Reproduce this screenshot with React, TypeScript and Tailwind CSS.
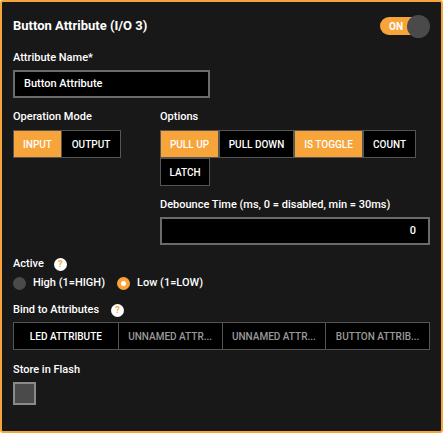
const Help = ({ gap }: { gap: string }) => (
  <span className={`${gap} inline-flex h-[13px] w-[13px] items-center justify-center rounded-full bg-white text-[9px] font-bold leading-none text-[#f7a43a]`}>
    ?
  </span>
);

const options = [
  { label: "PULL UP", active: true, w: "w-[59px]" },
  { label: "PULL DOWN", active: false, w: "w-[75px]" },
  { label: "IS TOGGLE", active: true, w: "w-[69px]" },
  { label: "COUNT", active: false, w: "w-[53px]" },
  { label: "LATCH", active: false, w: "w-[50px]" },
];

const binds = ["LED ATTRIBUTE", "UNNAMED ATTR...", "UNNAMED ATTR...", "BUTTON ATTRIB..."];

export default function App() {
  return (
    <div className="h-[433px] w-[443px] rounded-[3px] border-2 border-[#f7a43a] bg-[#181818] px-[11px] font-[family-name:Roboto,'Liberation_Sans',sans-serif] font-medium text-white">
      <div className="flex h-[48px] items-center justify-between">
        <h1 className="text-[13px] font-bold">Button Attribute (I/O 3)</h1>
        <div className="relative mr-[3px] flex h-[18px] w-[47px] items-center rounded-full bg-[#f7a43a]">
          <span className="ml-[9px] text-[10px] font-bold">ON</span>
          <span className="absolute right-[-3px] top-[-2.5px] h-[23px] w-[23px] rounded-full bg-[#4a4a4a]" />
        </div>
      </div>

      <div className="mt-px text-[11px] leading-[14px]">Attribute Name*</div>
      <div className="mt-[5px] flex h-[28px] w-[197px] items-center border-2 border-[#6b6b6b] bg-black px-[9px] text-[11px]">
        Button Attribute
      </div>

      <div className="mt-[12px] flex">
        <div className="w-[147px]">
          <div className="text-[11px] leading-[14px]">Operation Mode</div>
          <div className="mt-[6px] flex text-[10px]">
            <span className="flex h-[28px] w-[49px] items-center justify-center border border-[#555] bg-[#f7a43a]">INPUT</span>
            <span className="flex h-[28px] w-[59px] items-center justify-center border border-l-0 border-[#555] bg-black">OUTPUT</span>
          </div>
        </div>
        <div className="flex-1">
          <div className="text-[11px] leading-[14px]">Options</div>
          <div className="mt-[6px] flex w-[262px] flex-wrap text-[10px]">
            {options.map((o) => (
              <span
                key={o.label}
                className={`flex h-[28px] items-center justify-center border border-[#555] ${o.w} ${
                  o.active ? "bg-[#f7a43a]" : "bg-black"
                }`}
              >
                {o.label}
              </span>
            ))}
          </div>
          <div className="mt-[12px] text-[11px] leading-[14px]">Debounce Time (ms, 0 = disabled, min = 30ms)</div>
          <div className="mt-[5px] flex h-[28px] items-center justify-end border-2 border-[#6b6b6b] bg-black px-[12px] text-[11px]">
            0
          </div>
        </div>
      </div>

      <div className="mt-[12px] flex items-center text-[11px] leading-[14px]">
        Active
        <Help gap="ml-[10px]" />
      </div>
      <div className="mt-[5px] flex h-[14px] items-center text-[11px]">
        <span className="h-[13px] w-[13px] rounded-full bg-[#4a4a4a]" />
        <span className="ml-[7px]">High (1=HIGH)</span>
        <span className="ml-[12px] flex h-[13px] w-[13px] items-center justify-center rounded-full bg-[#f7a43a]">
          <span className="h-[5px] w-[5px] rounded-full bg-white" />
        </span>
        <span className="ml-[7px]">Low (1=LOW)</span>
      </div>

      <div className="mt-[13px] flex items-center text-[11px] leading-[14px]">
        Bind to Attributes
        <Help gap="ml-[12px]" />
      </div>
      <div className="mt-[5px] grid h-[28px] grid-cols-4 border border-[#555] text-[10px]">
        {binds.map((b, i) => (
          <span
            key={i}
            className={`flex items-center justify-center bg-black ${
              i > 0 ? "border-l border-[#555] text-[#9a9a9a]" : "text-white"
            }`}
          >
            {b}
          </span>
        ))}
      </div>

      <div className="mt-[13px] text-[11px] leading-[14px]">Store in Flash</div>
      <div className="mt-[5px] h-[23px] w-[23px] border-2 border-[#8a8a8a] bg-[#4a4a4a]" />
    </div>
  );
}
